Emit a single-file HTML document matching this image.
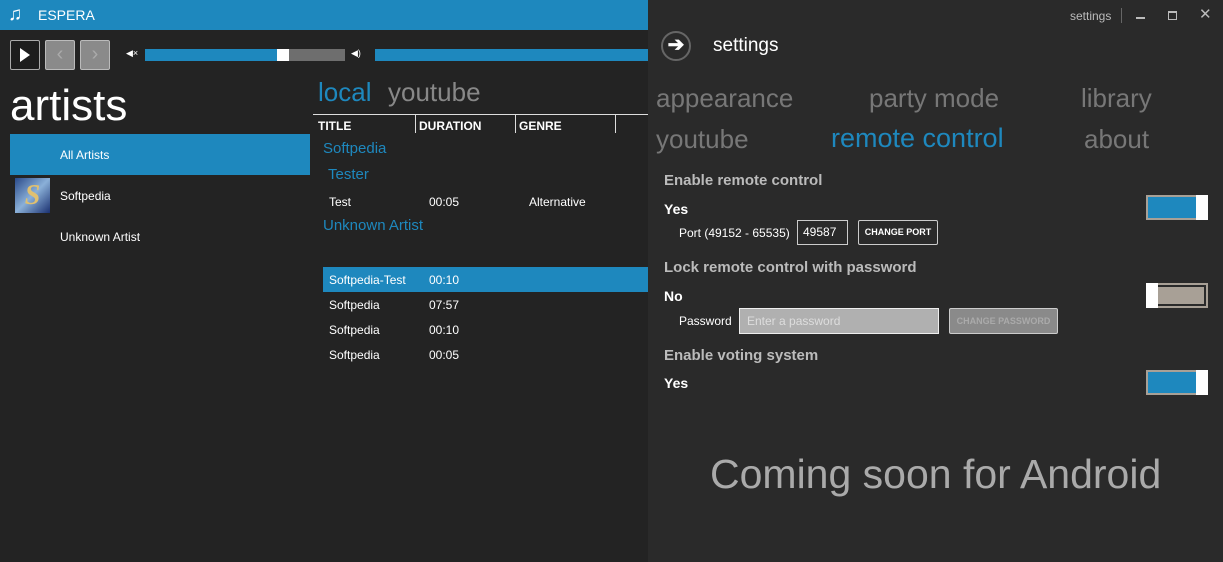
<!DOCTYPE html>
<html><head><meta charset="utf-8"><style>
*{margin:0;padding:0;box-sizing:border-box}
body{width:1223px;height:562px;overflow:hidden;background:#232323;font-family:"Liberation Sans",sans-serif;color:#fff;position:relative}
.a{position:absolute;white-space:nowrap}
.blue{color:#1e88be}
.g{color:#777}
</style></head><body>
<div class="a" style="left:0;top:0;width:648px;height:30px;background:#1e88be"></div>
<div class="a" style="left:8px;top:4px;font-size:19px">♫</div>
<div class="a" style="left:38px;top:7px;font-size:14px">ESPERA</div>
<div class="a" style="left:10px;top:40px;width:30px;height:30px;border:1px solid #aaa;border-radius:2px;background:#1d1d1d"></div>
<div class="a" style="left:20px;top:48px;width:0;height:0;border-left:10px solid #fff;border-top:7px solid transparent;border-bottom:7px solid transparent"></div>
<div class="a" style="left:45px;top:40px;width:30px;height:30px;border:1px solid #bbb;border-radius:2px;background:#8a8a8a;color:#aaa;font-size:20px;text-align:center;line-height:26px">‹</div>
<div class="a" style="left:80px;top:40px;width:30px;height:30px;border:1px solid #bbb;border-radius:2px;background:#8a8a8a;color:#aaa;font-size:20px;text-align:center;line-height:26px">›</div>
<div class="a" style="left:126px;top:48px;font-size:9px">◀×</div>
<div class="a" style="left:145px;top:49px;width:200px;height:12px;background:#6e6e6e"></div>
<div class="a" style="left:145px;top:49px;width:133px;height:12px;background:#1e88be"></div>
<div class="a" style="left:277px;top:49px;width:12px;height:12px;background:#fff"></div>
<div class="a" style="left:351px;top:48px;font-size:9px">◀)</div>
<div class="a" style="left:375px;top:49px;width:273px;height:12px;background:#1e88be"></div>
<div class="a" style="left:10px;top:80px;font-size:44px;line-height:52px">artists</div>
<div class="a" style="left:10px;top:134px;width:300px;height:41px;background:#1e88be"></div>
<div class="a" style="left:60px;top:148px;font-size:12px">All Artists</div>
<div class="a" style="left:15px;top:178px;width:35px;height:35px;background:linear-gradient(135deg,#2a4a8a,#8ab0d8,#1a3070);color:#e0c070;font:italic bold 28px 'Liberation Serif',serif;text-align:center;line-height:35px">S</div>
<div class="a" style="left:60px;top:189px;font-size:12px">Softpedia</div>
<div class="a" style="left:60px;top:230px;font-size:12px">Unknown Artist</div>
<div class="a blue" style="left:318px;top:77px;font-size:26px">local</div>
<div class="a g" style="left:388px;top:77px;font-size:26px;color:#888">youtube</div>
<div class="a" style="left:313px;top:114px;width:335px;height:1px;background:#ddd"></div>
<div class="a" style="left:415px;top:115px;width:1px;height:18px;background:#ddd"></div>
<div class="a" style="left:515px;top:115px;width:1px;height:18px;background:#ddd"></div>
<div class="a" style="left:615px;top:115px;width:1px;height:18px;background:#ddd"></div>
<div class="a" style="left:318px;top:119px;font-size:12px;font-weight:bold">TITLE</div>
<div class="a" style="left:419px;top:119px;font-size:12px;font-weight:bold">DURATION</div>
<div class="a" style="left:519px;top:119px;font-size:12px;font-weight:bold">GENRE</div>
<div class="a blue" style="left:323px;top:140px;font-size:15px">Softpedia</div>
<div class="a blue" style="left:328px;top:166px;font-size:15px">Tester</div>
<div class="a" style="left:329px;top:195px;font-size:12px">Test</div>
<div class="a" style="left:429px;top:195px;font-size:12px">00:05</div>
<div class="a" style="left:529px;top:195px;font-size:12px">Alternative</div>
<div class="a blue" style="left:323px;top:217px;font-size:15px">Unknown Artist</div>
<div class="a" style="left:323px;top:267px;width:325px;height:25px;background:#1e88be"></div>
<div class="a" style="left:329px;top:273px;font-size:12px">Softpedia-Test</div>
<div class="a" style="left:429px;top:273px;font-size:12px">00:10</div>
<div class="a" style="left:329px;top:298px;font-size:12px">Softpedia</div>
<div class="a" style="left:429px;top:298px;font-size:12px">07:57</div>
<div class="a" style="left:329px;top:323px;font-size:12px">Softpedia</div>
<div class="a" style="left:429px;top:323px;font-size:12px">00:10</div>
<div class="a" style="left:329px;top:348px;font-size:12px">Softpedia</div>
<div class="a" style="left:429px;top:348px;font-size:12px">00:05</div>

<div class="a" style="left:648px;top:0;width:575px;height:562px;background:#2a2a2a"></div>
<div class="a" style="left:1070px;top:9px;font-size:12px;color:#bbb">settings</div>
<div class="a" style="left:1121px;top:8px;width:1px;height:15px;background:#666"></div>
<div class="a" style="left:1136px;top:17px;width:9px;height:2px;background:#bbb"></div>
<div class="a" style="left:1168px;top:11px;width:9px;height:9px;border:1px solid #bbb;border-top-width:2px"></div>
<div class="a" style="left:1199px;top:5px;font-size:15px;color:#bbb">✕</div>
<div class="a" style="left:661px;top:31px;width:30px;height:30px;border:2px solid #666;border-radius:50%;text-align:center;line-height:24px;font-size:20px;font-weight:bold">➔</div>
<div class="a" style="left:713px;top:35px;font-size:19px">settings</div>
<div class="a" style="left:656px;top:83px;font-size:26px;color:#777">appearance</div>
<div class="a" style="left:869px;top:83px;font-size:26px;color:#777">party mode</div>
<div class="a" style="left:1081px;top:83px;font-size:26px;color:#777">library</div>
<div class="a" style="left:656px;top:124px;font-size:26px;color:#777">youtube</div>
<div class="a blue" style="left:831px;top:123px;font-size:27px">remote control</div>
<div class="a" style="left:1084px;top:124px;font-size:26px;color:#777">about</div>
<div class="a" style="left:664px;top:172px;font-size:15px;font-weight:bold;color:#bbb">Enable remote control</div>
<div class="a" style="left:664px;top:201px;font-size:14px;font-weight:bold">Yes</div>
<div class="a" style="left:679px;top:226px;font-size:12px">Port (49152 - 65535)</div>
<div class="a" style="left:797px;top:220px;width:51px;height:25px;border:1px solid #ccc;font-size:12px;padding:4px 5px">49587</div>
<div class="a" style="left:858px;top:220px;width:80px;height:25px;border:1px solid #ccc;border-radius:2px;font-size:9px;font-weight:bold;text-align:center;line-height:23px">CHANGE PORT</div>
<div class="a" style="left:1146px;top:195px;width:62px;height:25px;border:2px solid #a8a096;background:#1e88be"></div>
<div class="a" style="left:1196px;top:195px;width:12px;height:25px;background:#fff"></div>
<div class="a" style="left:664px;top:259px;font-size:15px;font-weight:bold;color:#bbb">Lock remote control with password</div>
<div class="a" style="left:664px;top:288px;font-size:14px;font-weight:bold">No</div>
<div class="a" style="left:679px;top:314px;font-size:12px">Password</div>
<div class="a" style="left:739px;top:308px;width:200px;height:26px;background:#b0b0b0;border:1px solid #eee;font-size:12px;color:#ddd;padding:5px 7px">Enter a password</div>
<div class="a" style="left:949px;top:308px;width:109px;height:26px;background:#8a8a8a;border:1px solid #ccc;border-radius:2px;font-size:9px;font-weight:bold;color:#aaa;text-align:center;line-height:24px">CHANGE PASSWORD</div>
<div class="a" style="left:1146px;top:283px;width:62px;height:25px;border:2px solid #a8a096;background:#a8a096;box-shadow:inset 0 0 0 2px #2a2a2a"></div>
<div class="a" style="left:1146px;top:283px;width:12px;height:25px;background:#fff"></div>
<div class="a" style="left:664px;top:347px;font-size:15px;font-weight:bold;color:#bbb">Enable voting system</div>
<div class="a" style="left:664px;top:375px;font-size:14px;font-weight:bold">Yes</div>
<div class="a" style="left:1146px;top:370px;width:62px;height:25px;border:2px solid #a8a096;background:#1e88be"></div>
<div class="a" style="left:1196px;top:370px;width:12px;height:25px;background:#fff"></div>
<div class="a" style="left:710px;top:451px;font-size:41px;color:#aaa">Coming soon for Android</div>
</body></html>
